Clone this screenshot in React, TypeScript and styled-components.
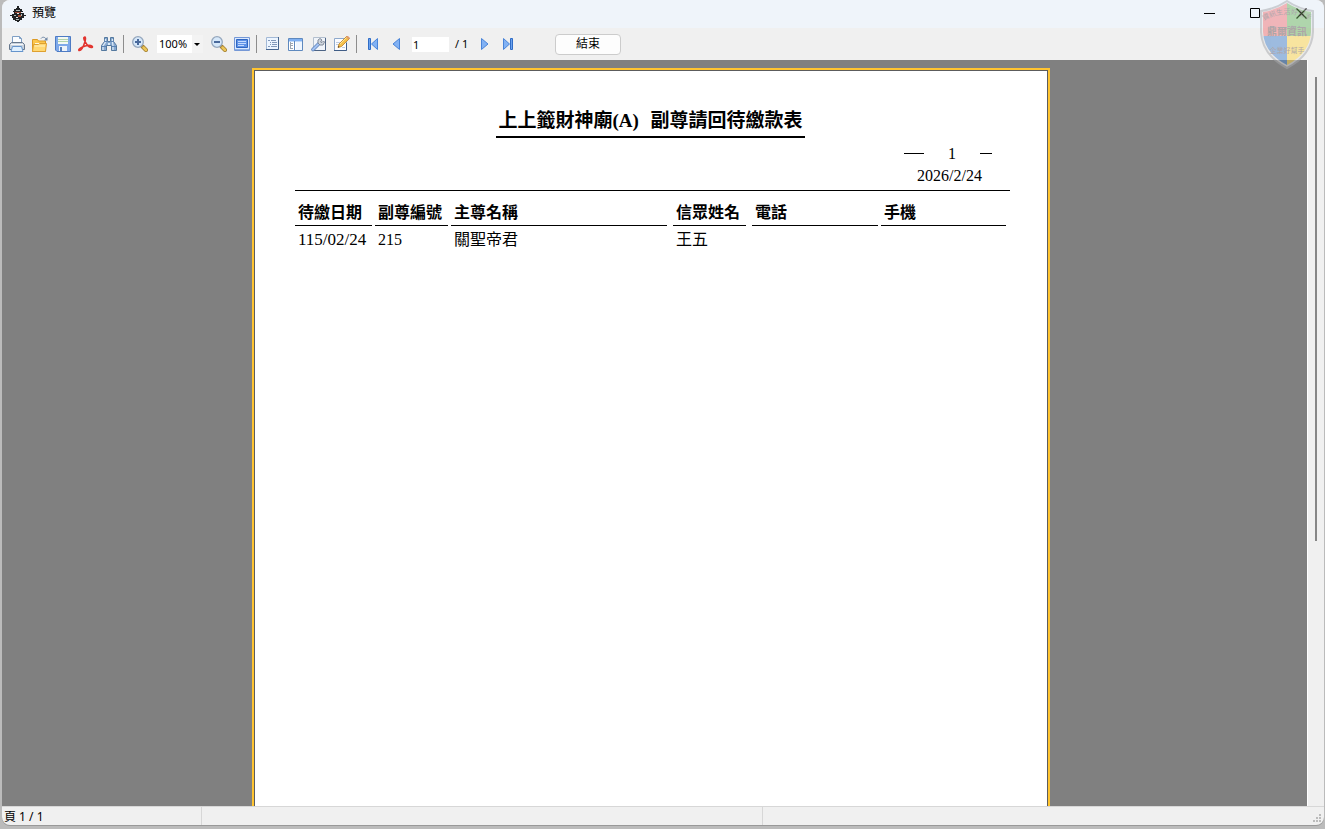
import React from "react";
import styled, { createGlobalStyle } from "styled-components";

const ui = '"Noto Sans", "Noto Sans CJK TC", sans-serif';
const print = '"Liberation Serif", "Noto Sans CJK TC", serif';

const GlobalStyle = createGlobalStyle`
  * { box-sizing: border-box; }
  body {
    margin: 0;
    background: linear-gradient(#8aa3b8, #9aa3ac 90%, #b8b8b8 98%);
    font-family: ${ui};
    color: #000;
  }
  button, input, select { font-family: inherit; color: inherit; margin: 0; }
`;

const Desktop = styled.div`
  height: 100vh;
  padding: 0 1px 4px 2px;
`;

const Window = styled.div`
  position: relative;
  display: flex;
  flex-direction: column;
  height: 100%;
  background: #f0f0f0;
  border-radius: 8px;
  overflow: hidden;
  box-shadow: 0 1px 0 #999, 0 4px 0 8px #bbb;
`;

const TitleBar = styled.header`
  display: flex;
  align-items: center;
  height: 28px;
  padding-left: 8px;
  background: #eff4fa;
`;

const WindowTitle = styled.h1`
  flex: 1;
  margin: 0 0 2px 6px;
  font-size: 12px;
  line-height: 18px;
  font-weight: 400;
`;

const CaptionButton = styled.button`
  display: flex;
  align-items: center;
  justify-content: center;
  width: 46px;
  height: 28px;
  padding: 0 0 2px;
  border: 0;
  background: transparent;
`;

const ToolBar = styled.div`
  display: flex;
  align-items: center;
  height: 32px;
  padding-left: 3px;
`;

const ToolButton = styled.button`
  display: flex;
  align-items: center;
  justify-content: center;
  width: 23px;
  height: 24px;
  padding: 0;
  border: 0;
  background: transparent;
`;

const Separator = styled.span`
  width: 1px;
  height: 18px;
  margin: 0 4px 0 3px;
  background: #8d8d8d;
`;

const ZoomBox = styled.span`
  display: flex;
  position: relative;
  margin: 0 4px 0 6px;
`;

const ZoomSelect = styled.select`
  appearance: none;
  width: 46px;
  height: 18px;
  padding: 0 0 0 2px;
  border: 0;
  border-radius: 0;
  background: linear-gradient(to right, #fff 35px, #f3f3f3 35px);
  font-size: 11px;
  line-height: 18px;
`;

const DropArrow = styled.svg`
  position: absolute;
  right: 3px;
  top: 8px;
  pointer-events: none;
`;

const PageInput = styled.input`
  width: 37px;
  height: 15px;
  margin-left: 5px;
  padding: 0 1px;
  border: 0;
  background: #fff;
  font-size: 11px;
  line-height: 15px;
`;

const PageTotal = styled.span`
  width: 18px;
  margin-left: 6px;
  font-size: 11px;
  line-height: 16px;
  white-space: pre;
`;

const EndButton = styled.button`
  width: 66px;
  height: 21px;
  margin-left: 36px;
  padding: 0;
  border: 1px solid #ccc;
  border-radius: 4px;
  background: #fdfdfd;
  font-size: 12px;
  line-height: 18px;
`;

const Workspace = styled.div`
  flex: 1;
  display: flex;
  min-height: 0;
`;

const Canvas = styled.main`
  flex: 1;
  display: flex;
  justify-content: center;
  padding: 8px 7px 0 0;
  background: #808080;
  overflow: hidden;
`;

const Sheet = styled.article`
  width: 798px;
  height: 1127px;
  flex: none;
  border: 2px solid #ffc430;
  background: #fff;
  box-shadow: inset 0 0 0 1px #5c5c5c;
  padding: 37px 38px 0 41px;
  display: flex;
  flex-direction: column;
  font-family: ${print};
`;

const ReportTitle = styled.h2`
  align-self: center;
  height: 31px;
  margin: 0 4px 0 0;
  padding: 0 2px;
  border-bottom: 2px solid #000;
  font-size: 19px;
  line-height: 28px;
  font-weight: 700;
  white-space: pre;
`;

const TitleCode = styled.span`
  margin-right: 7px;
`;

const Meta = styled.div`
  align-self: flex-end;
  width: 88px;
  margin: 5px 18px 3px 0;
  font-size: 16px;
  line-height: 22px;
`;

const PageMark = styled.div`
  display: flex;
  justify-content: space-between;
  align-items: center;
  height: 22px;
`;

const Dash = styled.span<{ $w: number }>`
  width: ${(p) => p.$w}px;
  height: 1px;
  margin-bottom: 2px;
  background: #000;
`;

const PrintDate = styled.div`
  padding-left: 3px;
  text-align: center;
`;

const Report = styled.table`
  width: 100%;
  table-layout: fixed;
  border-collapse: separate;
  border-spacing: 0;
  border-top: 1px solid #000;
  text-align: left;
`;

const HeadCell = styled.th<{ $w: number }>`
  width: ${(p) => p.$w}px;
  padding: 11px 0 0;
`;

const HeadLabel = styled.div<{ $gap: number }>`
  margin-right: ${(p) => p.$gap}px;
  padding: 0 0 1px 3px;
  border-bottom: 1px solid #000;
  font-size: 16px;
  line-height: 22px;
  font-weight: 700;
  white-space: nowrap;
`;

const Cell = styled.td`
  padding: 1px 0 0 3px;
  font-size: 16px;
  line-height: 26px;
  white-space: nowrap;
`;

const Digits = styled.span`
  font-size: 17px;
`;

const ScrollTrack = styled.div`
  width: 17px;
  padding: 17px 7px 0;
  border-left: 1px solid #fff;
  background: #f0f0f0;
`;

const ScrollThumb = styled.div`
  width: 2px;
  height: 464px;
  max-height: 90%;
  background: #868686;
`;

const StatusBar = styled.footer`
  display: flex;
  height: 19px;
  border-top: 1px solid #d7d7d7;
  font-size: 12px;
  line-height: 20px;
`;

const StatusPane = styled.div<{ $w?: number }>`
  ${(p) => (p.$w ? `width: ${p.$w}px; border-right: 1px solid #d7d7d7;` : "flex: 1;")}
  padding-left: 2px;
`;

const SizeGrip = styled.svg`
  align-self: flex-end;
  margin: 0 2px 2px 0;
`;

const Watermark = styled.svg`
  position: absolute;
  top: 0;
  right: 9px;
  opacity: 0.5;
  pointer-events: none;
`;

const Svg = ({ children }: { children: React.ReactNode }) => (
  <svg width="16" height="16" viewBox="0 0 16 16" aria-hidden="true">{children}</svg>
);

const AppIcon = () => (
  <Svg>
    <path d="M7 0h2v2h1v1h2v2h1v1h-2v1h3v2h2v1h-2v2h-2v2h-2v1H9v1H7v-1H5v-1H3v-2H2v-2H0V9h2V8h2V6H3V5h1V3h2V2h1z" fill="#202224" />
    <path d="M6 4h4v1H6zM4 9h2v1H4zM11 8h1v2h-1zM6 13h3v1H6z" fill="#aeb8b5" />
    <path d="M5 6h6v1H5zM8 9h3v2H8z" fill="#a04c36" />
    <path d="M6 11h2v1H6zM7 7h2v1H7z" fill="#e6e6e6" />
  </Svg>
);

const PrinterIcon = () => (
  <Svg>
    <path d="M3.500 7V.5h7l2 2V7" fill="#fbfdff" stroke="#7f9fc4" />
    <path d="M10.500.5v2h2" fill="none" stroke="#7f9fc4" />
    <path d="M2.500 6.500h11l2 2v5h-15v-5z" fill="#c9d2dc" stroke="#66778c" />
    <path d="M2 8.500h12" stroke="#f5f8fb" />
    <path d="M3.500 10.500h9l1.500 5H2z" fill="#dff0ff" stroke="#6594cc" />
  </Svg>
);

const OpenIcon = () => (
  <Svg>
    <path d="M.5 15.500v-12h5l1 1.500h7v10.500z" fill="#fbc64d" stroke="#dc9a25" />
    <path d="M3 7h9v4H3z" fill="#fff9df" />
    <path d="M.5 15.500l1-7h5l1-1h7l-1 8z" fill="#ffd873" stroke="#dea030" />
    <path d="M2.500 10h10.500" stroke="#fff2c0" />
    <path d="M9 2.500c1.500-2 4-1.500 5 .5" fill="none" stroke="#7088a6" />
    <path d="M12 4.500h3.500V1z" fill="#6f87a5" />
  </Svg>
);

const SaveIcon = () => (
  <Svg>
    <path d="M.5.500h15v15H2l-1.500-1.500z" fill="#7fa9ea" stroke="#4d7bc4" />
    <path d="M3 1h10v7H3z" fill="#f4f9f2" />
    <path d="M3 3.500h10M3 5.500h10" stroke="#b2d2ac" />
    <path d="M4 10h8v5H4z" fill="#edf2fa" />
    <path d="M5 11h2v4H5z" fill="#5580bd" />
  </Svg>
);

const PdfIcon = () => (
  <Svg>
    <path d="M6 1.500c1.500-1.500 2 1 .7 5S3 14.500 1.500 14.500s-.5-2 3-3.500 8-2 9.500-.8-1 2-3.200.3S5 3 6 1.500z" fill="none" stroke="#e2342e" strokeWidth="1.600" />
  </Svg>
);

const FindIcon = () => (
  <Svg>
    <path d="M3.500 1.500h3v4h3v-4h3v4l3 4v5h-5v-5h-5v5h-5v-5l3-4z" fill="#86a8d0" stroke="#54799f" />
    <path d="M4.500 3v3L2 10v4M11.500 3v3L12 10v4" fill="none" stroke="#dce9f6" strokeWidth="1.300" />
    <path d="M7 7h2v2H7z" fill="#dcecf9" />
    <path d="M3 5.500h3M10 5.500h3M1 10.500h4M11 10.500h4" stroke="#5c84b6" />
  </Svg>
);

const Magnifier = ({ plus }: { plus?: boolean }) => (
  <Svg>
    <path d="M10.500 10.500l3.500 3.500" stroke="#a07e34" strokeWidth="4" strokeLinecap="round" />
    <path d="M11.500 11.500l2.500 2.500" stroke="#ecc557" strokeWidth="2.500" strokeLinecap="round" />
    <circle cx="6" cy="6" r="5.300" fill="#d6e8fa" stroke="#95a7bd" strokeWidth="1.300" />
    <path d={plus ? "M3 6h6M6 3v6" : "M3 6h6"} stroke="#4a6a9c" strokeWidth="2" />
  </Svg>
);

const FullIcon = () => (
  <Svg>
    <path d="M.5 1.500h15v13H.5z" fill="#dbe9ff" stroke="#7598d6" />
    <path d="M2.500 3.500h11v8h-11z" fill="#5f92e6" stroke="#2f66c2" />
    <path d="M4 5.500h8M4 7.500h8M4 9.500h6" stroke="#c4daff" />
    <path d="M1 13.500h14" stroke="#8fb0e4" />
  </Svg>
);

const OutlineIcon = () => (
  <Svg>
    <path d="M1.500 1.500h12v12h-12z" fill="#edf5ff" stroke="#a3b9d6" />
    <path d="M1 13.500h12.500V1" fill="none" stroke="#46658f" />
    <path d="M3 4.500h2M6 4.500h5M5 6.500h1M7 6.500h5M5 8.500h1M7 8.500h5M3 10.500h2M6 10.500h6" stroke="#8399ba" />
  </Svg>
);

const ThumbsIcon = () => (
  <Svg>
    <path d="M.5 2.500h14v12H.5z" fill="#fff" stroke="#5f89be" />
    <path d="M1 3h13v2.500H1z" fill="#7fb0f2" />
    <path d="M6.500 5v9" stroke="#5f89be" />
    <path d="M2.500 6v7M3 7.500h2M3 9.500h2M3 12.500h2" stroke="#9da6b2" />
    <path d="M8 6h6v8H8z" fill="#eff6ff" />
  </Svg>
);

const SettingsIcon = () => (
  <Svg>
    <path d="M2.500 1.500h12v13h-12z" fill="#f0f4fa" stroke="#b3bfce" />
    <path d="M2 14.500h12.500V2" fill="none" stroke="#4d6485" />
    <path d="M2 13.500L8 7.500" stroke="#6488bd" strokeWidth="3.600" strokeLinecap="round" />
    <path d="M2 13.500L8 7.500" stroke="#a3c2f2" strokeWidth="2" strokeLinecap="round" />
    <path d="M9 2.500L7 4v3l2 2h3l1.500-3-1-1L11 6.500 9.500 6l1.500-2z" fill="#d1d7df" stroke="#818a98" />
  </Svg>
);

const EditIcon = () => (
  <Svg>
    <path d="M.5 2.500h12v12H.5z" fill="#fbfcff" stroke="#8ea9cc" />
    <path d="M0 14.500h12.500V7" fill="none" stroke="#405d86" />
    <path d="M2 6.500h4M2 8.500h3M8 11.500h3" stroke="#c0ccde" />
    <path d="M4 11.500l1-3.500 8-8 2.500 2.500-8 8z" fill="#f5c04a" stroke="#bd8127" strokeWidth=".8" />
    <path d="M6 8l7-7" stroke="#ffe694" />
    <path d="M4 11.500l.5-1.500 1 1z" fill="#222" />
    <path d="M12 1l1.500-1.500L16 2l-1.500 1.500z" fill="#df9a6c" />
  </Svg>
);

const NavIcon = ({ kind }: { kind: "first" | "prev" | "next" | "last" }) => {
  const back = kind === "first" || kind === "prev";
  const edge = kind === "first" || kind === "last";
  return (
    <Svg>
      <g transform={back ? undefined : "translate(16 0) scale(-1 1)"}>
        <path d={edge ? "M12.500 2.500v11L6.500 8z" : "M11.500 2.500v11L5 8z"} fill="#82b2f4" stroke="#4a84d8" />
        {edge && <path d="M3.500 2.500h2v11h-2z" fill="#6ba2ee" stroke="#2f6cc6" />}
      </g>
    </Svg>
  );
};

const Shield = () => (
  <Watermark width="56" height="70" viewBox="0 0 56 70" aria-hidden="true">
    <defs>
      <clipPath id="shield">
        <path d="M28 3Q39 10 52 12V32Q51 53 28 65Q5 53 4 32V12Q17 10 28 3z" />
      </clipPath>
    </defs>
    <path d="M28 1Q40 9 54 11V32Q53 55 28 68Q3 55 2 32V11Q16 9 28 1z" fill="#e2e2e2" stroke="#a6a7ab" strokeWidth="2" />
    <g clipPath="url(#shield)">
      <path d="M0 0h28v36H0z" fill="#f27679" />
      <path d="M28 0h28v36H28z" fill="#70b55f" />
      <path d="M0 36h28v34H0z" fill="#4b85ce" />
      <path d="M28 36h28v34H28z" fill="#ffd84f" />
    </g>
    <g fill="#6a5a5c" fontFamily='"Noto Sans CJK TC", sans-serif' textAnchor="middle">
      <path id="arc" d="M4 21Q28 7 52 21" fill="none" />
      <text fontSize="7"><textPath href="#arc" startOffset="50%">資訊生活好幫手</textPath></text>
      <text x="28" y="35" fontSize="10" fontWeight="700">鼎爾資訊</text>
      <text x="28" y="53" fontSize="7">企業好幫手</text>
    </g>
  </Watermark>
);

const columns = [
  { label: "待繳日期", width: 80, gap: 3 },
  { label: "副尊編號", width: 76, gap: 3 },
  { label: "主尊名稱", width: 222, gap: 6 },
  { label: "信眾姓名", width: 79, gap: 6 },
  { label: "電話", width: 129, gap: 3 },
  { label: "手機", width: 129, gap: 4 },
];

const fileTools = [
  { label: "列印", icon: <PrinterIcon /> },
  { label: "開啟", icon: <OpenIcon /> },
  { label: "儲存", icon: <SaveIcon /> },
  { label: "PDF", icon: <PdfIcon /> },
  { label: "尋找", icon: <FindIcon /> },
];

const pageTools = [
  { label: "大綱", icon: <OutlineIcon /> },
  { label: "縮圖", icon: <ThumbsIcon /> },
  { label: "設定", icon: <SettingsIcon /> },
  { label: "編輯", icon: <EditIcon /> },
];

const Tool = ({ label, children }: { label: string; children: React.ReactNode }) => (
  <ToolButton type="button" aria-label={label}>{children}</ToolButton>
);

export default function App() {
  return (
    <>
      <GlobalStyle />
      <Desktop>
        <Window>
          <TitleBar>
            <AppIcon />
            <WindowTitle>預覽</WindowTitle>
            <CaptionButton type="button" aria-label="最小化">
              <svg width="11" height="11"><path d="M0 5.500h11" stroke="#000" /></svg>
            </CaptionButton>
            <CaptionButton type="button" aria-label="最大化">
              <svg width="11" height="11"><path d="M.5.500h9v9h-9z" fill="none" stroke="#000" /></svg>
            </CaptionButton>
            <CaptionButton type="button" aria-label="關閉">
              <svg width="11" height="11"><path d="M.5.500l10 10M10.500.500l-10 10" stroke="#000" strokeWidth="1.300" /></svg>
            </CaptionButton>
          </TitleBar>

          <ToolBar role="toolbar">
            {fileTools.map((t) => <Tool key={t.label} label={t.label}>{t.icon}</Tool>)}
            <Separator />
            <Tool label="放大"><Magnifier plus /></Tool>
            <ZoomBox>
              <ZoomSelect aria-label="縮放比例" defaultValue="100%">
                <option>100%</option>
              </ZoomSelect>
              <DropArrow width="6" height="3" aria-hidden="true"><path d="M0 0h6L3 3z" /></DropArrow>
            </ZoomBox>
            <Tool label="縮小"><Magnifier /></Tool>
            <Tool label="全螢幕"><FullIcon /></Tool>
            <Separator />
            {pageTools.map((t) => <Tool key={t.label} label={t.label}>{t.icon}</Tool>)}
            <Separator />
            <Tool label="第一頁"><NavIcon kind="first" /></Tool>
            <Tool label="上一頁"><NavIcon kind="prev" /></Tool>
            <PageInput aria-label="頁碼" defaultValue="1" />
            <PageTotal>/ 1</PageTotal>
            <Tool label="下一頁"><NavIcon kind="next" /></Tool>
            <Tool label="最後一頁"><NavIcon kind="last" /></Tool>
            <EndButton type="button">結束</EndButton>
          </ToolBar>

          <Workspace>
            <Canvas>
              <Sheet>
                <ReportTitle>上上籤財神廟<TitleCode>(A)</TitleCode> 副尊請回待繳款表</ReportTitle>
                <Meta>
                  <PageMark><Dash $w={20} />1<Dash $w={12} /></PageMark>
                  <PrintDate>2026/2/24</PrintDate>
                </Meta>
                <Report>
                  <thead>
                    <tr>
                      {columns.map((c) => (
                        <HeadCell key={c.label} $w={c.width} scope="col">
                          <HeadLabel $gap={c.gap}>{c.label}</HeadLabel>
                        </HeadCell>
                      ))}
                    </tr>
                  </thead>
                  <tbody>
                    <tr>
                      <Cell><Digits>115/02/24</Digits></Cell>
                      <Cell>215</Cell>
                      <Cell>關聖帝君</Cell>
                      <Cell>王五</Cell>
                      <Cell />
                      <Cell />
                    </tr>
                  </tbody>
                </Report>
              </Sheet>
            </Canvas>
            <ScrollTrack><ScrollThumb /></ScrollTrack>
          </Workspace>

          <StatusBar>
            <StatusPane $w={200}>頁 1 / 1</StatusPane>
            <StatusPane $w={561} />
            <StatusPane />
            <SizeGrip width="9" height="9" aria-hidden="true">
              <path d="M6 0h2v2H6zM3 3h2v2H3zM6 3h2v2H6zM0 6h2v2H0zM3 6h2v2H3zM6 6h2v2H6z" fill="#bbb" />
            </SizeGrip>
          </StatusBar>
          <Shield />
        </Window>
      </Desktop>
    </>
  );
}
